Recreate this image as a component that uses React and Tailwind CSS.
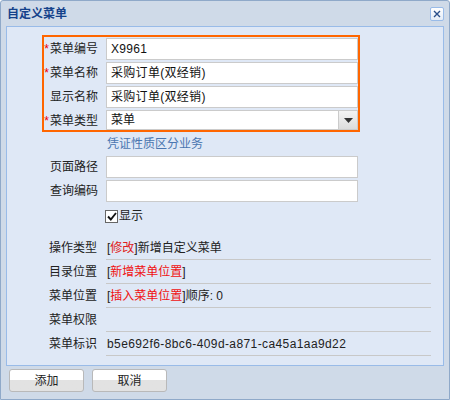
import React from "react";

const font = { fontFamily: '"Liberation Sans", "Noto Sans CJK SC", sans-serif' };

const Label = ({ required, children }) => (
  <div className="w-[62px] shrink-0 flex items-center justify-end pr-[8px] h-[22px] text-[12px] text-[#222]">
    {required && <span className="text-[#e00] mr-[1px]">*</span>}
    <span>{children}</span>
  </div>
);

const TextInput = ({ value, h = "h-[22px]" }) => (
  <div
    className={`flex-1 ${h} bg-white border border-[#cbcbcb] flex items-center pl-[4px] text-[12px] text-[#111] overflow-hidden tracking-[0.3px]`}
  >
    {value}
  </div>
);

const FormRow = ({ label, required, value, last }) => (
  <div className={`flex ${last ? "h-[20px]" : "h-[24px]"} items-start`}>
    <Label required={required}>{label}</Label>
    <TextInput value={value} h={last ? "h-[20px]" : "h-[22px]"} />
  </div>
);

const InfoRow = ({ label, children }) => (
  <div className="flex h-[24px] items-stretch">
    <div className="w-[64px] shrink-0 flex items-center justify-end pr-[9px] text-[12px] text-[#222]">
      {label}
    </div>
    <div className="w-[325px] border-b border-[#c8c8c8] flex items-center pl-[1px] text-[12px] text-[#222] whitespace-nowrap">
      {children}
    </div>
  </div>
);

export default function App() {
  return (
    <div
      className="w-[450px] h-[400px] bg-[#cfdae8] border border-[#8fa9c9] rounded-t-[3px] flex flex-col"
      style={font}
    >
      {/* title bar */}
      <div className="h-[25px] flex items-center justify-between pl-[6px] pr-[5px]">
        <span className="text-[12px] font-bold text-[#15428b]">自定义菜单</span>
        <div className="w-[14px] h-[14px] bg-gradient-to-b from-white to-[#e4ecf7] border border-[#99bbe8] rounded-[2px] flex items-center justify-center">
          <svg width="8" height="8" viewBox="0 0 8 8">
            <path d="M1 1L7 7M7 1L1 7" stroke="#2a4f8a" strokeWidth="1.4" />
          </svg>
        </div>
      </div>

      {/* body panel */}
      <div className="mx-[5px] h-[340px] border border-[#99bbe8] bg-[#dfe8f6] flex flex-col">
        <div className="ml-[35px] mt-[8px] w-[318px]">
          {/* highlighted block */}
          <div className="border-2 border-[#ff6600] pt-[1px]">
            <FormRow label="菜单编号" required value="X9961" />
            <FormRow label="菜单名称" required value="采购订单(双经销)" />
            <FormRow label="显示名称" value="采购订单(双经销)" />
            <div className="flex h-[20px] items-start">
              <Label required>菜单类型</Label>
              <div className="flex-1 h-[20px] bg-white border border-[#cbcbcb] flex items-center text-[12px] text-[#111]">
                <span className="flex-1 pl-[4px]">菜单</span>
                <div className="w-[19px] h-full border-l border-[#cbcbcb] bg-gradient-to-b from-[#f4f4f4] to-[#dcdcdc] flex items-center justify-center">
                  <svg width="9" height="5" viewBox="0 0 9 5">
                    <path d="M0 0H9L4.5 5Z" fill="#333" />
                  </svg>
                </div>
              </div>
            </div>
          </div>

          <div className="px-[2px]">
            <div className="h-[24px] flex items-center pl-[63px] text-[12px] text-[#4a76b0]">
              凭证性质区分业务
            </div>
            <FormRow label="页面路径" value="" />
            <FormRow label="查询编码" value="" />
            <div className="h-[24px] flex items-center pl-[61px] text-[12px] text-[#222]">
              <div className="w-[13px] h-[13px] bg-white border border-[#666] flex items-center justify-center mr-[1px]">
                <svg width="10" height="9" viewBox="0 0 10 9">
                  <path d="M1 4.5L3.8 7.5L9 1" stroke="#111" strokeWidth="1.9" fill="none" />
                </svg>
              </div>
              <span>显示</span>
            </div>
          </div>
        </div>

        {/* info rows */}
        <div className="ml-[35px] mt-[8px] flex flex-col">
          <InfoRow label="操作类型">
            [<span className="text-[#e02020]">修改</span>]新增自定义菜单
          </InfoRow>
          <InfoRow label="目录位置">
            [<span className="text-[#f01010]">新增菜单位置</span>]
          </InfoRow>
          <InfoRow label="菜单位置">
            [<span className="text-[#f01010]">插入菜单位置</span>]顺序: 0
          </InfoRow>
          <InfoRow label="菜单权限"></InfoRow>
          <InfoRow label="菜单标识">
            <span className="tracking-[0.4px]">b5e692f6-8bc6-409d-a871-ca45a1aa9d22</span>
          </InfoRow>
        </div>
      </div>

      {/* buttons */}
      <div className="flex gap-[8px] ml-[8px] mt-[3px]">
        {["添加", "取消"].map((t) => (
          <div
            key={t}
            className="w-[75px] h-[23px] border border-[#b9b9b9] rounded-[3px] bg-gradient-to-b from-white from-50% to-[#e2e2e2] to-50% flex items-center justify-center text-[12px] text-[#222]"
          >
            {t}
          </div>
        ))}
      </div>
    </div>
  );
}
